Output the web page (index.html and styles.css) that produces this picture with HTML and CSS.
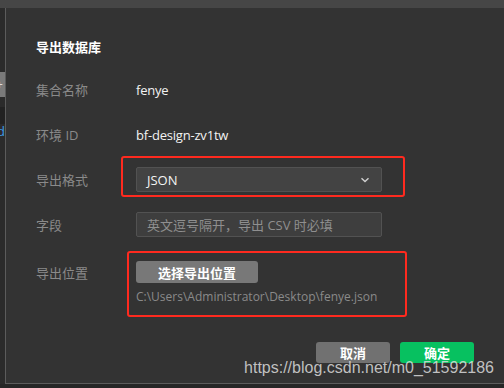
FILE: index.html
```html
<!DOCTYPE html>
<html lang="zh-CN">
<head>
  <meta charset="UTF-8" />
  <title>导出数据库</title>
  <link rel="stylesheet" href="styles.css">
</head>
<body>
  <div class="topbar"></div>
  <div class="workspace">
    <!-- sliver of the panel behind the dialog -->
    <div class="side">
      <div class="side-tab">+</div>
      <div class="side-dark"></div>
      <div class="side-link">d</div>
    </div>

    <div class="dialog">
      <h1 class="title">导出数据库</h1>

      <div class="row">
        <span class="label">集合名称</span>
        <span class="value">fenye</span>
      </div>
      <div class="row">
        <span class="label">环境 ID</span>
        <span class="value">bf-design-zv1tw</span>
      </div>
      <div class="row">
        <span class="label">导出格式</span>
        <div class="field marked marked-format">
          <div class="select">
            <span>JSON</span>
            <svg class="chevron" width="10" height="6" viewBox="0 0 10 6">
              <path d="M1.5 1.2 L5 4.6 L8.5 1.2" fill="none" stroke="#cfcfcf" stroke-width="1.4" />
            </svg>
          </div>
        </div>
      </div>
      <div class="row">
        <span class="label">字段</span>
        <div class="field">
          <div class="input">英文逗号隔开，导出 CSV 时必填</div>
        </div>
      </div>
      <div class="row row-top">
        <span class="label">导出位置</span>
        <div class="field marked marked-path">
          <button class="btn btn-pick">选择导出位置</button>
          <div class="path">C:\Users\Administrator\Desktop\fenye.json</div>
        </div>
      </div>

      <div class="footer">
        <button class="btn btn-cancel">取消</button>
        <button class="btn btn-ok">确定</button>
      </div>

      <div class="watermark">https://blog.csdn.net/m0_51592186</div>
    </div>
  </div>
</body>
</html>
```

FILE: styles.css
```css
* {
  box-sizing: border-box;
}

body {
  margin: 0;
  height: 388px;
  overflow: hidden;
  background: #262626;
  font-family: "Open Sans", "Noto Sans CJK SC", sans-serif;
  font-size: 13px;
  color: #f0f0f0;
}

.topbar {
  height: 8px;
  background: #464646;
}

.workspace {
  display: flex;
  height: 376px;
}

.side {
  width: 5px;
  background: #2b2b2b;
  padding-top: 64px;
  overflow: hidden;
}

.side-tab {
  height: 25px;
  background: #7a7a7a;
  color: #ddd;
  font-size: 12px;
  line-height: 25px;
  text-indent: -4px;
}

.side-dark {
  height: 17px;
  margin-top: 10px;
  background: #222;
}

.side-link {
  color: #3d9be9;
  font-size: 13px;
  line-height: 14px;
  text-indent: -3px;
}

.dialog {
  position: relative;
  flex: 1;
  background: #333333;
  border-left: 1px solid #5c5c5c;
  border-bottom: 1px solid #5c5c5c;
  padding: 29px 30px 0 30px;
}

.title {
  margin: 0 0 10px;
  font-size: 13px;
  font-weight: bold;
  line-height: 20px;
  color: #ffffff;
}

.row {
  display: flex;
  align-items: center;
  height: 45px;
}

.row-top {
  align-items: flex-start;
  height: auto;
  margin-top: 14px;
}

.row-top .label {
  line-height: 24px;
}

.label {
  width: 100px;
  flex-shrink: 0;
  color: #8a8a8a;
}

.value {
  color: #f2f2f2;
  letter-spacing: -0.2px;
}

.field {
  width: 246px;
}

.select, .input {
  height: 25px;
  background: #434343;
  border: 1px solid #525252;
  border-radius: 2px;
  padding: 0 10px;
  display: flex;
  align-items: center;
}

.select {
  justify-content: space-between;
  color: #f4f4f4;
}

.input {
  background: #3e3e3e;
  color: #8f8f8f;
}

.chevron {
  margin-right: 1px;
}

/* red annotation boxes drawn over the screenshot */
.marked {
  position: relative;
}

.marked::after {
  content: "";
  position: absolute;
  border: 2px solid #ff2a1f;
  border-radius: 3px;
}

.marked-format::after {
  left: -15px;
  right: -23px;
  top: -11px;
  bottom: -5px;
}

.marked-path::after {
  left: -9px;
  right: -25px;
  top: -10px;
  bottom: -12px;
}

.btn {
  border: none;
  border-radius: 3px;
  font-family: inherit;
  font-size: 13px;
  font-weight: bold;
  color: #ffffff;
  cursor: pointer;
  padding: 0;
}

.btn-pick {
  display: block;
  width: 122px;
  height: 22px;
  background: #787878;
}

.path {
  margin-top: 6px;
  line-height: 16px;
  font-size: 12px;
  color: #8a8a8a;
}

.footer {
  display: flex;
  justify-content: flex-end;
  gap: 10px;
  margin-top: 37px;
}

.btn-cancel, .btn-ok {
  width: 74px;
  height: 21px;
}

.btn-cancel {
  background: #717171;
}

.btn-ok {
  background: #07c160;
}

.watermark {
  position: absolute;
  right: 10px;
  bottom: 6px;
  font-family: "Liberation Sans", Arial, sans-serif;
  font-size: 16px;
  color: rgba(220, 220, 220, 0.85);
}
```
